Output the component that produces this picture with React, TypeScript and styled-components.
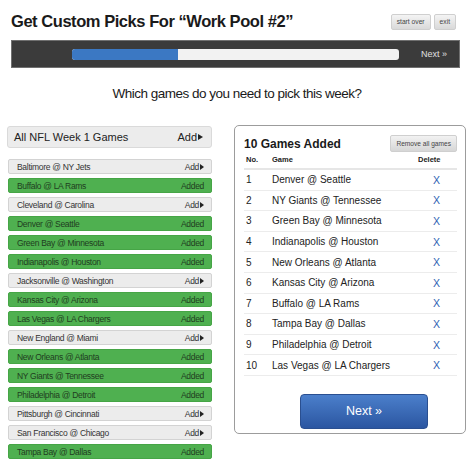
import React from 'react';
import styled, { createGlobalStyle } from 'styled-components';

type Game = {
  name: string;
  added: boolean;
};

const games: Array<Game> = [
  { name: 'Baltimore @ NY Jets', added: false },
  { name: 'Buffalo @ LA Rams', added: true },
  { name: 'Cleveland @ Carolina', added: false },
  { name: 'Denver @ Seattle', added: true },
  { name: 'Green Bay @ Minnesota', added: true },
  { name: 'Indianapolis @ Houston', added: true },
  { name: 'Jacksonville @ Washington', added: false },
  { name: 'Kansas City @ Arizona', added: true },
  { name: 'Las Vegas @ LA Chargers', added: true },
  { name: 'New England @ Miami', added: false },
  { name: 'New Orleans @ Atlanta', added: true },
  { name: 'NY Giants @ Tennessee', added: true },
  { name: 'Philadelphia @ Detroit', added: true },
  { name: 'Pittsburgh @ Cincinnati', added: false },
  { name: 'San Francisco @ Chicago', added: false },
  { name: 'Tampa Bay @ Dallas', added: true },
];

const picked = [
  'Denver @ Seattle',
  'NY Giants @ Tennessee',
  'Green Bay @ Minnesota',
  'Indianapolis @ Houston',
  'New Orleans @ Atlanta',
  'Kansas City @ Arizona',
  'Buffalo @ LA Rams',
  'Tampa Bay @ Dallas',
  'Philadelphia @ Detroit',
  'Las Vegas @ LA Chargers',
];

const progress = 0.325;

const App: React.FC = () => {
  return (
    <>
      <GlobalStyle />
      <DivPage>
        <DivHeader>
          <H1Title>Get Custom Picks For “Work Pool #2”</H1Title>
          <DivControls>
            <SmallButton>start over</SmallButton>
            <SmallButton>exit</SmallButton>
          </DivControls>
        </DivHeader>

        <DivBar>
          <DivTrack>
            <DivFill style={{ width: `${progress * 100}%` }} />
          </DivTrack>
          <SpanBarNext>Next »</SpanBarNext>
        </DivBar>

        <PQuestion>Which games do you need to pick this week?</PQuestion>

        <DivColumns>
          <DivGameList>
            <DivAllGames>
              <span>All NFL Week 1 Games</span>
              <SpanAdd>
                Add
                <Arrow $big />
              </SpanAdd>
            </DivAllGames>
            <DivRows>
              {games.map((game) => (
                <DivGameRow key={game.name} $added={game.added}>
                  <span>{game.name}</span>
                  {game.added ? (
                    <span>Added</span>
                  ) : (
                    <SpanAdd>
                      Add
                      <Arrow />
                    </SpanAdd>
                  )}
                </DivGameRow>
              ))}
            </DivRows>
          </DivGameList>

          <DivPanel>
            <DivPanelHeader>
              <H2Count>{picked.length} Games Added</H2Count>
              <RemoveButton>Remove all games</RemoveButton>
            </DivPanelHeader>
            <DivTable>
              <DivHeadRow>
                <span>No.</span>
                <span>Game</span>
                <SpanDeleteHead>Delete</SpanDeleteHead>
              </DivHeadRow>
              {picked.map((name, i) => (
                <DivPickRow key={name}>
                  <span>{i + 1}</span>
                  <span>{name}</span>
                  <SpanDelete>X</SpanDelete>
                </DivPickRow>
              ))}
            </DivTable>
            <NextButton>Next »</NextButton>
          </DivPanel>
        </DivColumns>
      </DivPage>
    </>
  );
};

const GlobalStyle = createGlobalStyle`
  body {
    margin: 0;
    background: #ffffff;
    font-family: "Liberation Sans", Arial, sans-serif;
    color: #222;
  }
`;

const DivPage = styled.div`
  width: 474px;
  height: 474px;
  overflow: hidden;
`;

// Header
//----------------------------------------------
const DivHeader = styled.div`
  box-sizing: border-box;
  height: 40px;
  padding: 3px 18px 0 11px;
  display: flex;
  align-items: center;
`;

const H1Title = styled.h1`
  margin: 0;
  font-size: 16.5px;
  letter-spacing: -0.45px;
  font-weight: 700;
  color: #1a1a1a;
`;

const DivControls = styled.div`
  margin-left: auto;
  display: flex;
  gap: 3px;
`;

const SmallButton = styled.button`
  height: 16px;
  padding: 0 5px;
  border: 1px solid #cfcfcf;
  border-radius: 2px;
  background: linear-gradient(#f4f4f4, #d9d9d9);
  font-family: inherit;
  font-size: 6.7px;
  color: #444;
`;

// Progress bar
//----------------------------------------------
const DivBar = styled.div`
  box-sizing: border-box;
  height: 28px;
  margin: 0 14px 0 11px;
  padding-left: 60px;
  background: #3b3b3b;
  border: 1px solid #707070;
  display: flex;
  align-items: center;
`;

const DivTrack = styled.div`
  width: 327px;
  height: 11px;
  border-radius: 3px;
  background: #f2f2f2;
  overflow: hidden;
`;

const DivFill = styled.div`
  height: 100%;
  background: #3b78c3;
`;

const SpanBarNext = styled.span`
  margin-left: 22px;
  font-size: 9px;
  color: #e0e0e0;
`;

const PQuestion = styled.p`
  margin: 17px 0 0 0;
  line-height: 17px;
  text-align: center;
  font-size: 13.5px;
  letter-spacing: -0.5px;
  color: #1a1a1a;
`;

// Columns
//----------------------------------------------
const DivColumns = styled.div`
  margin-top: 23px;
  padding-left: 7px;
  display: flex;
  align-items: flex-start;
  gap: 22px;
`;

const DivGameList = styled.div`
  width: 205px;
  padding-top: 1px;
`;

const DivAllGames = styled.div`
  box-sizing: border-box;
  height: 22px;
  padding: 0 8px 0 6px;
  border: 1px solid #dadada;
  border-radius: 3px;
  background: #ececec;
  display: flex;
  align-items: center;
  justify-content: space-between;
  font-size: 11px;
  color: #222;
`;

const DivRows = styled.div`
  margin-top: 11px;
  display: flex;
  flex-direction: column;
  gap: 4px;
`;

const DivGameRow = styled.div<{ $added: boolean }>`
  box-sizing: border-box;
  height: 15px;
  margin-left: 1px;
  padding: 0 7px 0 8px;
  border: 1px solid ${(p) => (p.$added ? '#46a546' : '#d3d3d3')};
  border-radius: 2px;
  background: ${(p) => (p.$added ? '#4fb050' : '#ececec')};
  display: flex;
  align-items: center;
  justify-content: space-between;
  font-size: 8.5px;
  letter-spacing: -0.3px;
  color: ${(p) => (p.$added ? '#1f3d1f' : '#333')};
`;

const SpanAdd = styled.span`
  display: flex;
  align-items: center;
  gap: 1px;
`;

const Arrow = styled.i<{ $big?: boolean }>`
  display: inline-block;
  width: 0;
  height: 0;
  border-style: solid;
  border-color: transparent transparent transparent #222;
  border-width: ${(p) => (p.$big ? '3.5px 0 3.5px 5px' : '3px 0 3px 4px')};
`;

// Picked panel
//----------------------------------------------
const DivPanel = styled.div`
  box-sizing: border-box;
  width: 232px;
  height: 309px;
  padding: 0 8px 0 9px;
  border: 1px solid #9c9c9c;
  border-radius: 5px;
`;

const DivPanelHeader = styled.div`
  height: 25px;
  padding-top: 5px;
  display: flex;
  align-items: center;
  justify-content: space-between;
`;

const H2Count = styled.h2`
  margin: 0;
  font-size: 12px;
  font-weight: 700;
  color: #1a1a1a;
`;

const RemoveButton = styled.button`
  height: 17px;
  padding: 0 5px;
  border: 1px solid #cfcfcf;
  border-radius: 2px;
  background: linear-gradient(#f2f2f2, #d6d6d6);
  font-family: inherit;
  font-size: 6.6px;
  color: #444;
`;

const DivTable = styled.div`
  margin-top: -5px;
`;

const DivHeadRow = styled.div`
  height: 17px;
  padding-left: 2px;
  border-bottom: 2px solid #e6e6e6;
  display: grid;
  grid-template-columns: 26px 1fr 47px;
  align-items: center;
  font-size: 7.5px;
  font-weight: 700;
  color: #222;
`;

const SpanDeleteHead = styled.span`
  padding-left: 8px;
`;

const DivPickRow = styled.div`
  height: 19.6px;
  padding-left: 2px;
  border-bottom: 1px solid #ececec;
  display: grid;
  grid-template-columns: 26px 1fr 47px;
  align-items: center;
  font-size: 10px;
  color: #222;
`;

const SpanDelete = styled.span`
  padding-left: 23px;
  font-size: 10.5px;
  color: #2f5fb3;
`;

const NextButton = styled.button`
  display: block;
  width: 128px;
  height: 35px;
  margin: 18px 0 0 56px;
  border: 1px solid #2a4f90;
  border-radius: 4px;
  background: linear-gradient(#4b7fcb, #2b56a1);
  font-family: inherit;
  font-size: 12.5px;
  color: #ffffff;
`;

export default App;
